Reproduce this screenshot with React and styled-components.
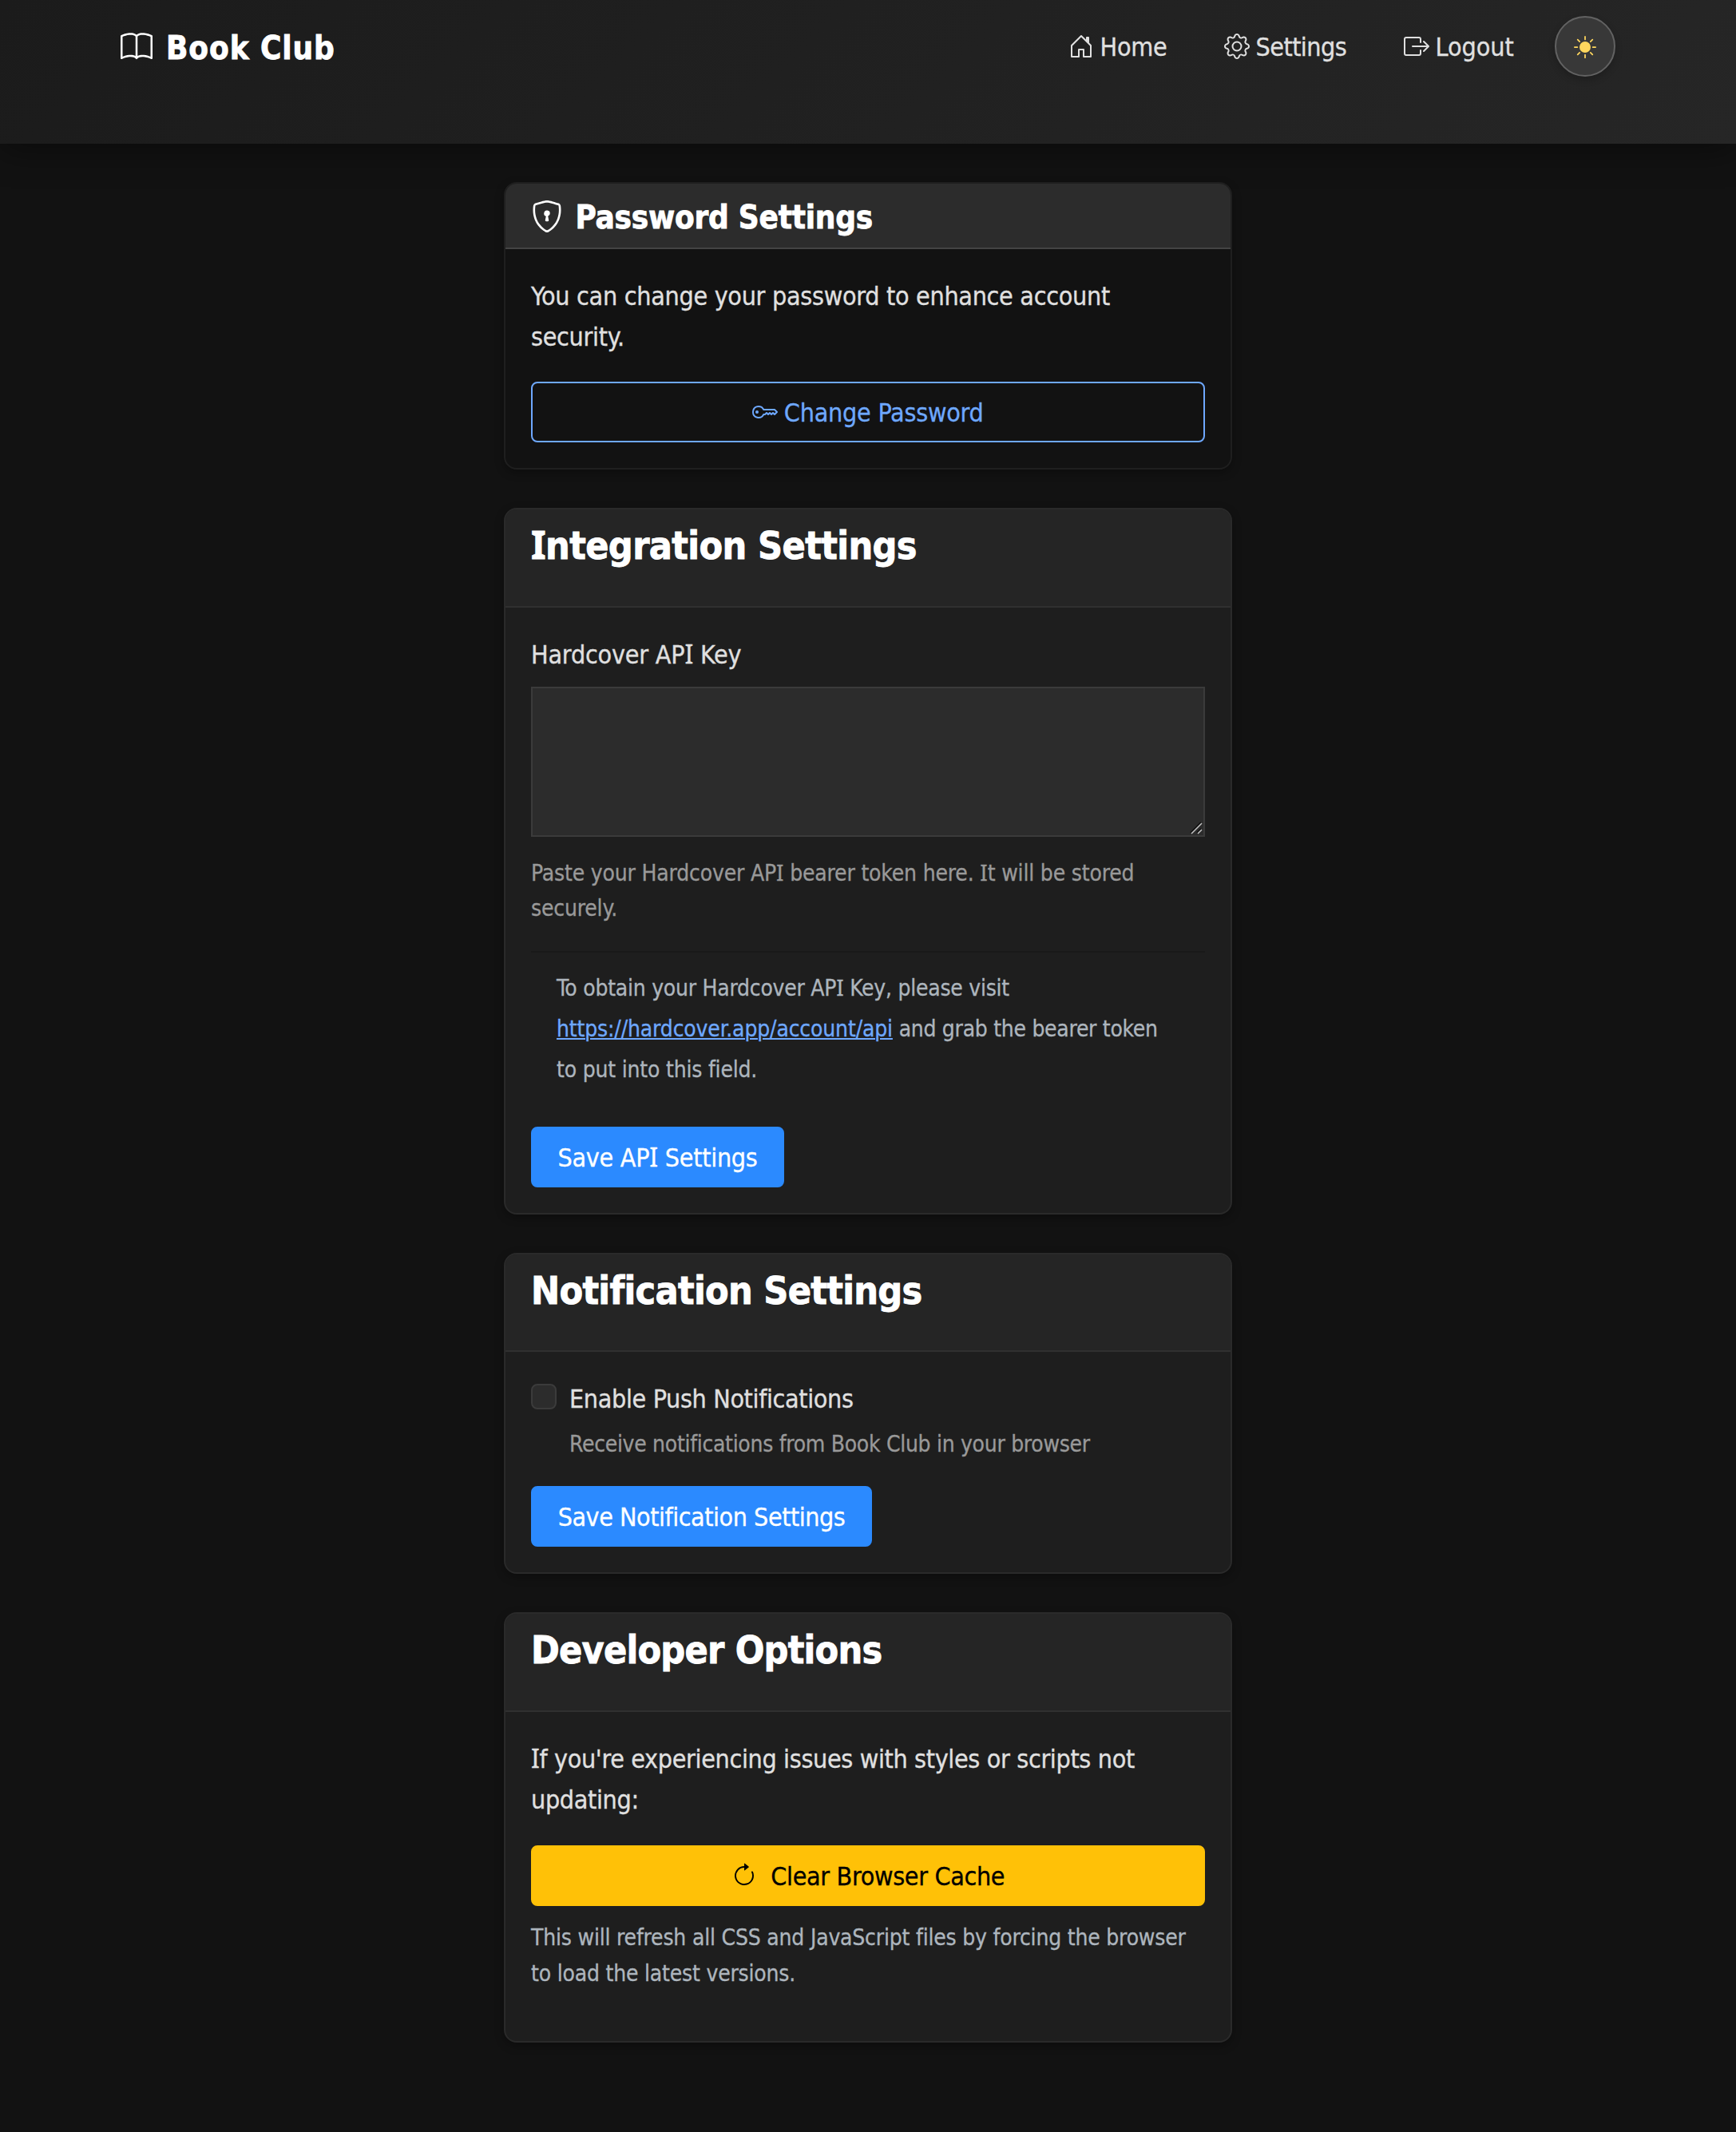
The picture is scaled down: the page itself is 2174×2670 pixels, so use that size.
import React from "react";
import styled, { createGlobalStyle, css } from "styled-components";
import {
  BsBook,
  BsHouseDoor,
  BsGear,
  BsBoxArrowRight,
  BsSunFill,
  BsShieldLock,
  BsKey,
  BsArrowClockwise,
} from "react-icons/bs";

const GlobalStyle = createGlobalStyle`
  *, *::before, *::after { box-sizing: border-box; }
  body {
    margin: 0;
    min-height: 2670px;
    background: #121212;
    color: #e0e0e0;
    font-family: "DejaVu Sans Condensed", "DejaVu Sans", "Noto Sans", sans-serif;
    font-size: 32px;
    line-height: 51.2px;
    -webkit-text-stroke: 0.3px;
  }
  h1, h2, p { margin: 0; }
  svg { display: block; flex: none; }
`;

const SerifI = styled.span`
  font-family: "Noto Sans", sans-serif;
  line-height: 0;
`;

function Copy({ children }) {
  return children
    .split(/(I)/)
    .map((part, i) => (part === "I" ? <SerifI key={i}>I</SerifI> : part));
}

const tracked = css`
  letter-spacing: ${(p) => p.$track ?? -0.3}px;
  white-space: nowrap;
`;

const heavy = css`
  font-weight: 700;
  -webkit-text-stroke: 0.8px;
`;

const Header = styled.header`
  display: flex;
  justify-content: space-between;
  align-items: flex-start;
  height: 180px;
  padding: 20px 151px 0;
  background: linear-gradient(135deg, #1b1b1b 0%, #262626 100%);
  box-shadow: 0 8px 40px rgba(0, 0, 0, 0.4);
`;

const Brand = styled.a`
  display: flex;
  align-items: center;
  gap: 17px;
  height: 76px;
  padding-top: 2px;
  color: #fff;
  font-size: 40px;
`;

const BrandName = styled.span`
  ${tracked}
  ${heavy}
  padding-top: 2.4px;
`;

const Nav = styled.nav`
  display: flex;
  align-items: center;
  height: 76px;
`;

const NavLink = styled.a`
  display: flex;
  align-items: center;
  gap: ${(p) => p.$gap}px;
  width: ${(p) => p.$width}px;
  color: #e0e0e0;
`;

const NavText = styled.span`
  ${tracked}
  padding-top: 3px;
`;

const ThemeToggle = styled.button`
  display: flex;
  align-items: center;
  justify-content: center;
  width: 76px;
  height: 76px;
  padding: 2px 0 0;
  border: 2px solid #626262;
  border-radius: 50%;
  background: #383838;
  color: #ffd75e;
  box-shadow: 0 4px 10px rgba(0, 0, 0, 0.2);
`;

const Main = styled.main`
  display: flex;
  flex-direction: column;
  gap: 48px;
  width: 912px;
  margin: 48px auto 0;
`;

const Card = styled.section`
  display: flex;
  flex-direction: column;
  height: ${(p) => p.$height}px;
  border: 2px solid ${(p) => (p.$dark ? "#1f1f1f" : "#2a2a2a")};
  border-radius: 16px;
  background: ${(p) => (p.$dark ? "#121212" : "#1e1e1e")};
  box-shadow: 0 4px 12px rgba(0, 0, 0, 0.3);
  overflow: hidden;
`;

const IconHeader = styled.div`
  display: flex;
  align-items: center;
  gap: 15.5px;
  height: 82px;
  padding: 1px 32px 0;
  background: #2c2c2c;
  border-bottom: 2px solid #444;
  color: #fff;
`;

const IconTitle = styled.h2`
  ${tracked}
  ${heavy}
  padding-top: 3.6px;
  font-size: 40px;
`;

const CardHeader = styled.div`
  height: ${(p) => p.$height}px;
  padding: 17px 32px 0;
  background: #252525;
  border-bottom: 2px solid #303030;
`;

const CardTitle = styled.h2`
  ${tracked}
  ${heavy}
  color: #fff;
  font-size: 48px;
  line-height: 57.6px;
`;

const CardBody = styled.div`
  display: flex;
  flex-direction: column;
  align-items: flex-start;
  padding: 34px 32px 0;
`;

const Text = styled.p`
  ${tracked}
  margin-bottom: ${(p) => p.$after ?? 0}px;
`;

const Label = styled.label`
  ${tracked}
  display: block;
  height: 51px;
`;

const HelpText = styled.p`
  ${tracked}
  margin-top: ${(p) => p.$before}px;
  color: ${(p) => (p.$cool ? "#adb5bd" : "#999")};
  font-size: 28px;
  line-height: 44.8px;
`;

const KeyField = styled.textarea`
  display: block;
  width: 100%;
  height: 188px;
  border: 2px solid #3b3b3b;
  border-radius: 0;
  background: #2c2c2c;
  resize: none;
  outline: none;
`;

const FieldWrap = styled.div`
  position: relative;
  width: 100%;
  margin-top: 14px;
`;

const Grip = styled.svg`
  position: absolute;
  right: 3px;
  bottom: 3px;
`;

const Divider = styled.hr`
  width: 100%;
  height: 2px;
  margin: 30px 0 0;
  border: 0;
  background: #191919;
`;

const Note = styled.div`
  margin: 18.8px 32px 0;
  color: #adb5bd;
  font-size: 28px;
`;

const NoteLine = styled.div`
  ${tracked}
`;

const Link = styled.a`
  color: #6ea8fe;
  text-decoration: underline;
  text-decoration-thickness: 2px;
  text-underline-offset: 2px;
  letter-spacing: -0.16px;
`;

const buttonTones = {
  primary: css`
    background: #2b8aff;
    border-color: #2b8aff;
    color: #fff;
  `,
  outline: css`
    background: transparent;
    border-color: #6ea8fe;
    color: #6ea8fe;
  `,
  warning: css`
    background: #ffc107;
    border-color: #ffc107;
    color: #000;
  `,
};

const Button = styled.button`
  display: flex;
  align-items: center;
  justify-content: center;
  gap: ${(p) => p.$gap ?? 0}px;
  width: ${(p) => (p.$width ? `${p.$width}px` : "100%")};
  height: 76px;
  margin-top: ${(p) => p.$before ?? 0}px;
  padding: 0;
  border: 2px solid;
  border-radius: 8px;
  font: inherit;
  ${(p) => buttonTones[p.$tone]}
`;

const ButtonText = styled.span`
  ${tracked}
  padding-top: 3px;
`;

const CheckRow = styled.div`
  display: flex;
  gap: 16px;
`;

const Checkbox = styled.span`
  width: 32px;
  height: 32px;
  margin-top: 6px;
  border: 2px solid #3b3b3b;
  border-radius: 8px;
  background: #2c2c2c;
`;

export default function App() {
  return (
    <>
      <GlobalStyle />
      <Header>
        <Brand>
          <BsBook size={40} />
          <BrandName $track={0.92}>Book Club</BrandName>
        </Brand>
        <Nav>
          <NavLink $width={195} $gap={7.5}>
            <BsHouseDoor size={32} />
            <NavText $track={-0.25}>Home</NavText>
          </NavLink>
          <NavLink $width={225} $gap={7.5}>
            <BsGear size={32} />
            <NavText $track={-0.55}>Settings</NavText>
          </NavLink>
          <NavLink $width={189} $gap={7.5}>
            <BsBoxArrowRight size={32} />
            <NavText $track={-0.05}>Logout</NavText>
          </NavLink>
          <ThemeToggle aria-label="Toggle theme">
            <BsSunFill size={28} />
          </ThemeToggle>
        </Nav>
      </Header>

      <Main>
        <Card $dark $height={360}>
          <IconHeader>
            <BsShieldLock size={40} />
            <IconTitle $track={-0.23}>Password Settings</IconTitle>
          </IconHeader>
          <CardBody>
            <Text $track={-0.31} $after={29.6}>
              You can change your password to enhance account
              <br />
              security.
            </Text>
            <Button $tone="outline" $gap={7.5}>
              <BsKey size={32} />
              <ButtonText $track={-0.26}>Change Password</ButtonText>
            </Button>
          </CardBody>
        </Card>

        <Card $height={885}>
          <CardHeader $height={123}>
            <CardTitle $track={-0.63}>
              <Copy>Integration Settings</Copy>
            </CardTitle>
          </CardHeader>
          <CardBody>
            <Label $track={-0.22}>
              <Copy>Hardcover API Key</Copy>
            </Label>
            <FieldWrap>
              <KeyField aria-label="Hardcover API Key" />
              <Grip width="16" height="16" viewBox="0 0 16 16">
                <path d="M2 15 15 2M10 15l5-5" stroke="#111" strokeWidth="2" fill="none" transform="translate(-1 -1)" />
                <path d="M2 15 15 2M10 15l5-5" stroke="#c4c4c4" strokeWidth="1.5" fill="none" />
              </Grip>
            </FieldWrap>
            <HelpText $track={-0.18} $before={23.6}>
              <Copy>Paste your Hardcover API bearer token here. It will be stored</Copy>
              <br />
              securely.
            </HelpText>
            <Divider />
            <Note>
              <NoteLine $track={-0.25}>
                <Copy>To obtain your Hardcover API Key, please visit</Copy>
              </NoteLine>
              <NoteLine $track={-0.29}>
                <Link>https://hardcover.app/account/api</Link> and grab the bearer token
              </NoteLine>
              <NoteLine $track={-0.2}>to put into this field.</NoteLine>
            </Note>
            <Button $tone="primary" $width={317} $before={45.6}>
              <ButtonText $track={-0.28}>
                <Copy>Save API Settings</Copy>
              </ButtonText>
            </Button>
          </CardBody>
        </Card>

        <Card $height={402}>
          <CardHeader $height={122}>
            <CardTitle $track={-0.7}>Notification Settings</CardTitle>
          </CardHeader>
          <CardBody>
            <CheckRow>
              <Checkbox role="checkbox" aria-checked="false" />
              <div>
                <Label $track={-0.37}>Enable Push Notifications</Label>
                <HelpText $track={-0.3} $before={8.6}>
                  Receive notifications from Book Club in your browser
                </HelpText>
              </div>
            </CheckRow>
            <Button $tone="primary" $width={427} $before={29.6}>
              <ButtonText $track={-0.48}>Save Notification Settings</ButtonText>
            </Button>
          </CardBody>
        </Card>

        <Card $height={539}>
          <CardHeader $height={123}>
            <CardTitle $track={-0.79}>Developer Options</CardTitle>
          </CardHeader>
          <CardBody>
            <Text $track={-0.36} $after={30.6}>
              <Copy>If you're experiencing issues with styles or scripts not</Copy>
              <br />
              updating:
            </Text>
            <Button $tone="warning" $gap={17.5}>
              <BsArrowClockwise size={32} />
              <ButtonText $track={-0.36}>Clear Browser Cache</ButtonText>
            </Button>
            <HelpText $cool $track={-0.2} $before={18.2}>
              This will refresh all CSS and JavaScript files by forcing the browser
              <br />
              to load the latest versions.
            </HelpText>
          </CardBody>
        </Card>
      </Main>
    </>
  );
}
